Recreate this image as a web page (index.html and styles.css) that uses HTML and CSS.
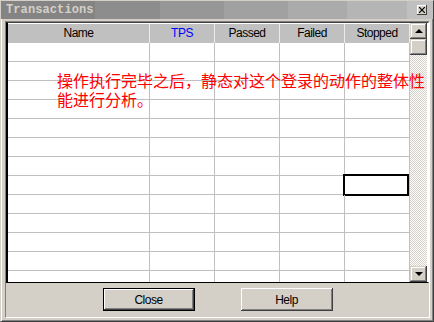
FILE: index.html
```html
<!DOCTYPE html>
<html lang="en">
<head>
  <meta charset="UTF-8">
  <meta name="viewport" content="width=device-width, initial-scale=1.0">
  <title>Transactions</title>
  <link rel="stylesheet" href="styles.css">
</head>
<body>
  <div class="window">
    <div class="titlebar">
      <span class="title">Transactions</span>
      <span class="close-box">
        <svg width="6" height="6" viewBox="0 0 6 6"><path d="M0 0L6 6M6 0L0 6" stroke="#000" stroke-width="1.2"/></svg>
      </span>
    </div>

    <div class="client">
      <div class="grid">
        <div class="table">
          <div class="head">
            <div class="hcell col-name">Name</div>
            <div class="hcell col tps">TPS</div>
            <div class="hcell col">Passed</div>
            <div class="hcell col">Failed</div>
            <div class="hcell col">Stopped</div>
          </div>
          <div class="rows">
            <div class="row"><div class="cell col-name"></div><div class="cell col"></div><div class="cell col"></div><div class="cell col"></div><div class="cell col"></div></div>
            <div class="row"><div class="cell col-name"></div><div class="cell col"></div><div class="cell col"></div><div class="cell col"></div><div class="cell col"></div></div>
            <div class="row"><div class="cell col-name"></div><div class="cell col"></div><div class="cell col"></div><div class="cell col"></div><div class="cell col"></div></div>
            <div class="row"><div class="cell col-name"></div><div class="cell col"></div><div class="cell col"></div><div class="cell col"></div><div class="cell col"></div></div>
            <div class="row"><div class="cell col-name"></div><div class="cell col"></div><div class="cell col"></div><div class="cell col"></div><div class="cell col"></div></div>
            <div class="row"><div class="cell col-name"></div><div class="cell col"></div><div class="cell col"></div><div class="cell col"></div><div class="cell col"></div></div>
            <div class="row"><div class="cell col-name"></div><div class="cell col"></div><div class="cell col"></div><div class="cell col"></div><div class="cell col"></div></div>
            <div class="row"><div class="cell col-name"></div><div class="cell col"></div><div class="cell col"></div><div class="cell col"></div><div class="cell col selected"></div></div>
            <div class="row"><div class="cell col-name"></div><div class="cell col"></div><div class="cell col"></div><div class="cell col"></div><div class="cell col"></div></div>
            <div class="row"><div class="cell col-name"></div><div class="cell col"></div><div class="cell col"></div><div class="cell col"></div><div class="cell col"></div></div>
            <div class="row"><div class="cell col-name"></div><div class="cell col"></div><div class="cell col"></div><div class="cell col"></div><div class="cell col"></div></div>
            <div class="row"><div class="cell col-name"></div><div class="cell col"></div><div class="cell col"></div><div class="cell col"></div><div class="cell col"></div></div>
            <div class="row"><div class="cell col-name"></div><div class="cell col"></div><div class="cell col"></div><div class="cell col"></div><div class="cell col"></div></div>
          </div>
        </div>

        <div class="scrollbar">
          <div class="sb-btn"><span class="arrow-up"></span></div>
          <div class="sb-thumb"></div>
          <div class="sb-track"></div>
          <div class="sb-btn"><span class="arrow-down"></span></div>
        </div>
      </div>

      <div class="buttons">
        <button class="btn default">Close</button>
        <button class="btn">Help</button>
      </div>
    </div>

    <p class="note">操作执行完毕之后，静态对这个登录的动作的整体性<br>能进行分析。</p>
  </div>
</body>
</html>
```

FILE: styles.css
```css
body {
  margin: 0;
  background-color: #d4d0c8;
  font-family: "Liberation Sans", Arial, sans-serif;
}

.window {
  position: relative;
  width: 434px;
  height: 322px;
  box-sizing: border-box;
  display: flex;
  flex-direction: column;
  background-color: #d4d0c8;
  border-top: 1px solid #d4d0c8;
  border-left: 1px solid #d4d0c8;
  border-right: 1px solid #404040;
  border-bottom: 1px solid #404040;
  box-shadow: inset 1px 1px #ffffff, inset -1px -1px #808080;
}

/* title bar */
.titlebar {
  height: 18px;
  flex: 0 0 18px;
  display: flex;
  align-items: center;
  justify-content: space-between;
  padding-left: 5px;
  padding-right: 6px;
  background: linear-gradient(to right,
    #848484 0, #848484 94px,
    #8d8d8d 94px, #8d8d8d 159px,
    #979797 159px, #979797 223px,
    #a1a1a1 223px, #a1a1a1 287px,
    #ababab 287px, #ababab 346px,
    #b5b5b5 346px, #b5b5b5 406px,
    #c0c0c0 406px);
}

.title {
  font-family: "Liberation Mono", "Courier New", monospace;
  font-weight: bold;
  font-size: 12px;
  color: #d4d0c8;
  letter-spacing: 0.1px;
}

.close-box {
  width: 10px;
  height: 10px;
  box-sizing: border-box;
  display: flex;
  align-items: center;
  justify-content: center;
  background-color: #d4d0c8;
  box-shadow: inset -1px -1px #404040, inset 1px 1px #ffffff;
}

/* client area */
.client {
  flex: 1;
  display: flex;
  flex-direction: column;
  margin: 2px 3px 3px 4px;
  border-top: 1px solid #808080;
  border-left: 1px solid #808080;
  border-right: 1px solid #ffffff;
  border-bottom: 1px solid #ffffff;
}

.grid {
  height: 261px;
  box-sizing: border-box;
  display: flex;
  border-top: 1px solid #404040;
  border-left: 2px solid #000000;
  border-right: 1px solid #ffffff;
  border-bottom: 1px solid #000000;
  background-color: #ffffff;
}

.table {
  flex: 0 0 402px;
  overflow: hidden;
}

.head {
  display: flex;
  height: 20px;
  box-sizing: border-box;
  border-top: 1px solid #ffffff;
  background-color: #c0c0c0;
}

.hcell {
  box-sizing: border-box;
  border-right: 1px solid #ececec;
  text-align: center;
  font-size: 12px;
  letter-spacing: -0.5px;
  line-height: 19px;
  color: #000000;
}

.hcell.tps {
  color: #0000ff;
}

.col-name {
  width: 142px;
}

.col {
  width: 65px;
}

.row {
  display: flex;
  height: 19px;
  box-sizing: border-box;
  border-bottom: 1px solid #c0c0c0;
}

.cell {
  position: relative;
  height: 18px;
  box-sizing: border-box;
  border-right: 1px solid #c0c0c0;
}

.cell.selected::after {
  content: "";
  position: absolute;
  left: -2px;
  top: -2px;
  width: 66px;
  height: 22px;
  box-sizing: border-box;
  border: 2px solid #000000;
}

/* scrollbar */
.scrollbar {
  flex: 0 0 17px;
  display: flex;
  flex-direction: column;
  background: repeating-conic-gradient(#d4d0c8 0 25%, #ffffff 0 50%) 0 0 / 2px 2px;
}

.sb-btn,
.sb-thumb {
  height: 16px;
  flex: 0 0 16px;
  box-sizing: border-box;
  background-color: #d4d0c8;
  box-shadow: inset -1px -1px #404040, inset 1px 1px #d4d0c8, inset -2px -2px #808080, inset 2px 2px #ffffff;
  display: flex;
  align-items: center;
  justify-content: center;
}

.sb-track {
  flex: 1;
}

.arrow-up {
  width: 0;
  height: 0;
  border-left: 4px solid transparent;
  border-right: 4px solid transparent;
  border-bottom: 4px solid #000000;
}

.arrow-down {
  width: 0;
  height: 0;
  border-left: 4px solid transparent;
  border-right: 4px solid transparent;
  border-top: 4px solid #000000;
}

/* bottom buttons */
.buttons {
  flex: 1;
  display: flex;
  justify-content: center;
  align-items: flex-start;
  gap: 46px;
  padding-top: 5px;
}

.btn {
  width: 92px;
  height: 23px;
  padding: 0;
  border: none;
  background-color: #d4d0c8;
  font-family: "Liberation Sans", Arial, sans-serif;
  font-size: 12px;
  letter-spacing: -0.5px;
  color: #000000;
  box-shadow: inset -1px -1px #404040, inset 1px 1px #ffffff, inset -2px -2px #808080, inset 2px 2px #d4d0c8;
}

.btn.default {
  border: 1px solid #000000;
  box-shadow: inset -1px -1px #404040, inset 1px 1px #ffffff, inset -2px -2px #808080;
}

/* red annotation over the dialog */
.note {
  position: absolute;
  left: 56px;
  top: 70px;
  margin: 0;
  font-family: "Noto Sans CJK SC", sans-serif;
  font-size: 16px;
  line-height: 19px;
  color: #ff0000;
  white-space: nowrap;
}
```
